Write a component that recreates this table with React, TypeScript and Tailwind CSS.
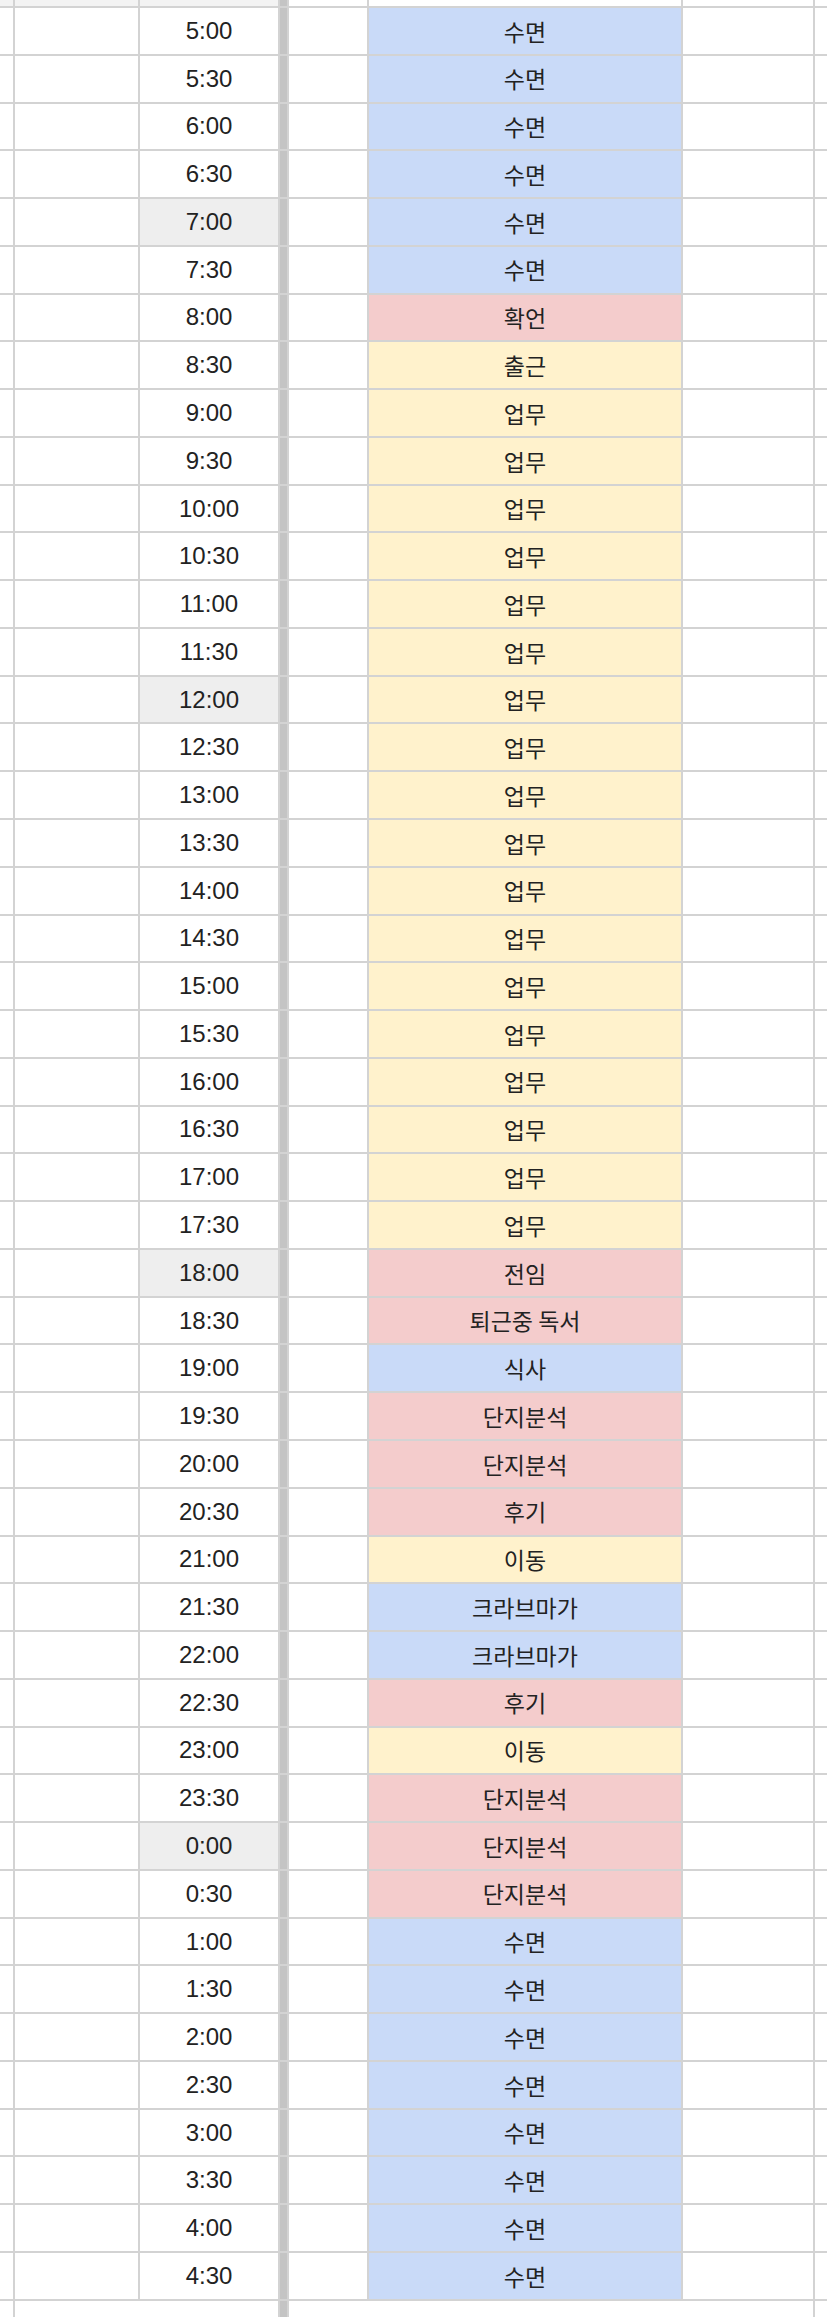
const rows: [string, string, "b" | "r" | "y", boolean?][] = [
  ["5:00", "수면", "b"],
  ["5:30", "수면", "b"],
  ["6:00", "수면", "b"],
  ["6:30", "수면", "b"],
  ["7:00", "수면", "b", true],
  ["7:30", "수면", "b"],
  ["8:00", "확언", "r"],
  ["8:30", "출근", "y"],
  ["9:00", "업무", "y"],
  ["9:30", "업무", "y"],
  ["10:00", "업무", "y"],
  ["10:30", "업무", "y"],
  ["11:00", "업무", "y"],
  ["11:30", "업무", "y"],
  ["12:00", "업무", "y", true],
  ["12:30", "업무", "y"],
  ["13:00", "업무", "y"],
  ["13:30", "업무", "y"],
  ["14:00", "업무", "y"],
  ["14:30", "업무", "y"],
  ["15:00", "업무", "y"],
  ["15:30", "업무", "y"],
  ["16:00", "업무", "y"],
  ["16:30", "업무", "y"],
  ["17:00", "업무", "y"],
  ["17:30", "업무", "y"],
  ["18:00", "전임", "r", true],
  ["18:30", "퇴근중 독서", "r"],
  ["19:00", "식사", "b"],
  ["19:30", "단지분석", "r"],
  ["20:00", "단지분석", "r"],
  ["20:30", "후기", "r"],
  ["21:00", "이동", "y"],
  ["21:30", "크라브마가", "b"],
  ["22:00", "크라브마가", "b"],
  ["22:30", "후기", "r"],
  ["23:00", "이동", "y"],
  ["23:30", "단지분석", "r"],
  ["0:00", "단지분석", "r", true],
  ["0:30", "단지분석", "r"],
  ["1:00", "수면", "b"],
  ["1:30", "수면", "b"],
  ["2:00", "수면", "b"],
  ["2:30", "수면", "b"],
  ["3:00", "수면", "b"],
  ["3:30", "수면", "b"],
  ["4:00", "수면", "b"],
  ["4:30", "수면", "b"],
]

const fills = {
  b: "bg-[#c9daf8]",
  r: "bg-[#f4cccc]",
  y: "bg-[#fff2cc]",
}

const cols = "grid grid-cols-[13px_123px_138px_7px_78px_312px_130px_12px] gap-x-[2px] bg-[#d3d3d3]"

export default function App() {
  return (
    <div
      className="w-[827px] h-[2317px] overflow-hidden bg-white text-[#222]"
      style={{ fontFamily: '"Liberation Sans", "Noto Sans CJK KR", sans-serif' }}
    >
      {/* top edge of the row above */}
      <div className={`${cols} h-[6px]`}>
        <div className="bg-[#f3f3f3]" />
        <div className="bg-[#f3f3f3]" />
        <div className="bg-[#f3f3f3]" />
        <div className="bg-[#c4c4c4]" />
        <div className="bg-white" />
        <div className="bg-white" />
        <div className="bg-white" />
        <div className="bg-white" />
      </div>

      {rows.map(([time, task, color, marked]) => (
        <div key={time} className={`${cols} h-[47.77px] border-t-2 border-[#d3d3d3]`}>
          <div className="bg-white" />
          <div className="bg-white" />
          <div
            className={`flex items-center justify-center text-[24px] ${
              marked ? "bg-[#eeeeee]" : "bg-white"
            }`}
          >
            {time}
          </div>
          <div className="bg-[#c4c4c4]" />
          <div className="bg-white" />
          <div className={`flex items-center justify-center text-[23px] ${fills[color]}`}>
            <span style={{ fontFamily: '"Noto Sans CJK KR", sans-serif' }}>{task}</span>
          </div>
          <div className="bg-white" />
          <div className="bg-white" />
        </div>
      ))}

      {/* merged row below */}
      <div className="grid h-[20px] grid-cols-[13px_263px_7px_524px_12px] gap-x-[2px] border-t-2 border-[#d3d3d3] bg-[#d3d3d3]">
        <div className="bg-white" />
        <div className="bg-white" />
        <div className="bg-[#c4c4c4]" />
        <div className="bg-white" />
        <div className="bg-white" />
      </div>
    </div>
  )
}
